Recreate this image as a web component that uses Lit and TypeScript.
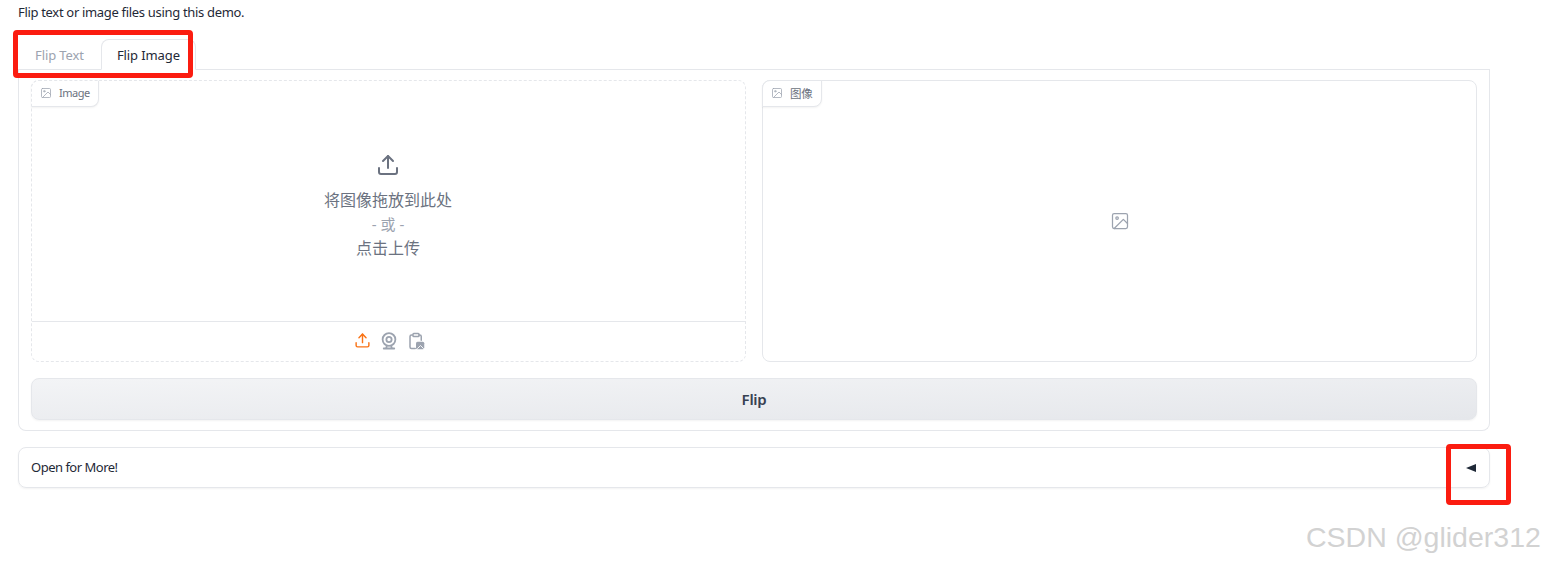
import { LitElement, html, css } from "lit";
import { customElement } from "lit/decorators.js";

const imgIcon = (s: number) => html`<svg class="ic" width=${s} height=${s} viewBox="0 0 24 24" fill="none" stroke="currentColor" stroke-width="1.5" stroke-linecap="round" stroke-linejoin="round"><rect x="3" y="3" width="18" height="18" rx="2"></rect><circle cx="8.5" cy="8.5" r="1.5"></circle><polyline points="21 15 16 10 5 21"></polyline></svg>`;

@customElement("app-root")
export class AppRoot extends LitElement {
  static styles = css`
    :host { display: block; position: relative; width: 1545px; height: 564px; overflow: hidden; background: #fff;
      font-family: "Noto Sans", "Noto Sans CJK SC", sans-serif; color: #1f2937; }
    .page { display: flex; flex-direction: column; padding: 4px 55px 0 18px; }
    .intro { font-size: 13px; line-height: 17px; height: 17px; letter-spacing: -0.32px; }
    .tabs { display: flex; margin-top: 18px; height: 30px; padding-left: 1px; border-bottom: 1px solid #e5e7eb; box-sizing: content-box; }
    .tab { font-size: 13px; letter-spacing: -0.1px; padding: 0 16px; line-height: 32px; color: #9ca3af; }
    .tab.on { color: #1f2937; border: 1px solid #e5e7eb; border-bottom: 1px solid #fff; border-radius: 8px 8px 0 0; line-height: 30px; box-sizing: border-box; margin-bottom: -1px; margin-left: 1px; height: 31px; padding: 0 15px; }
    .panel { border: 1px solid #e5e7eb; border-top: 0; border-radius: 0 0 8px 8px; padding: 10px 12px 9px; height: 361px; box-sizing: border-box; display: flex; flex-direction: column; gap: 16px; }
    .row { display: flex; gap: 16px; height: 282px; flex: none; }
    .block { flex: 1; position: relative; border: 1px solid #e5e7eb; border-radius: 8px; display: flex; flex-direction: column; box-sizing: border-box; min-width: 0; }
    .block.dash { border-style: dashed; }
    .label { position: absolute; left: -1px; top: -1px; height: 27px; box-sizing: border-box; display: flex; align-items: center; gap: 7px; padding: 0 8px 2px; font-size: 11.5px; letter-spacing: -0.2px; color: #6b7280; background: #fff; border: 1px solid #e5e7eb; border-radius: 8px 0 8px 0; box-shadow: 0 1px 2px rgba(0,0,0,.05); }
    .label.dash { border-style: dashed; border-right-style: solid; border-bottom-style: solid; font-size: 11px; letter-spacing: -0.5px; }
    .label .ic { color: #9ca3af; }
    .drop { flex: 1; display: flex; flex-direction: column; align-items: center; padding-top: 72px; padding-right: 1px; color: #6b7280; font-size: 16px; line-height: 24px; }
    .drop svg { margin-bottom: 11px; color: #6b7280; }
    .or { color: #9ca3af; font-size: 15px; }
    .tools { height: 40px; border-top: 1px solid #e5e7eb; display: flex; justify-content: center; align-items: center; gap: 9px; color: #9ca3af; padding: 0 0 2px 1px; box-sizing: border-box; }
    .empty { flex: 1; display: flex; align-items: center; justify-content: center; color: #9ca3af; }
    .btn { height: 42px; flex: none; border: 1px solid #e5e7eb; border-radius: 8px; background: linear-gradient(to bottom right, #f3f4f6, #e5e7eb); display: flex; align-items: center; justify-content: center; font-size: 15px; font-weight: 600; color: #374151; box-shadow: 0 1px 2px rgba(0,0,0,.05); letter-spacing: -0.3px; box-sizing: border-box; }
    .acc { margin-top: 16px; height: 41px; border: 1px solid #e5e7eb; border-radius: 8px; display: flex; align-items: center; justify-content: space-between; padding: 0 13px 2px 12px; font-size: 13px; letter-spacing: -0.5px; box-shadow: 0 1px 2px rgba(0,0,0,.05); box-sizing: border-box; }
    .tri { width: 0; height: 0; border-top: 4.5px solid transparent; border-bottom: 4.5px solid transparent; border-right: 10px solid #1f2937; margin-top: 2px; }
    .mark { position: absolute; border: 5px solid #fb1c10; border-radius: 4px; box-sizing: border-box; }
    .m1 { left: 13px; top: 30px; width: 180px; height: 48px; }
    .m2 { left: 1446px; top: 444px; width: 65px; height: 61px; }
    .wm { position: absolute; left: 1306px; top: 520px; font-family: "Liberation Sans", sans-serif; font-size: 28.5px; line-height: 35px; color: #d2d2d2; white-space: nowrap; }
  `;

  render() {
    return html`
      <div class="page">
        <div class="intro">Flip text or image files using this demo.</div>
        <div class="tabs"><div class="tab">Flip Text</div><div class="tab on">Flip Image</div></div>
        <div class="panel">
          <div class="row">
            <div class="block dash">
              <div class="label dash">${imgIcon(12)}<span>Image</span></div>
              <div class="drop">
                <svg width="24" height="24" viewBox="0 0 24 24" fill="none" stroke="currentColor" stroke-width="2" stroke-linecap="round" stroke-linejoin="round"><path d="M21 15v4a2 2 0 0 1-2 2H5a2 2 0 0 1-2-2v-4"></path><polyline points="17 8 12 3 7 8"></polyline><line x1="12" y1="3" x2="12" y2="15"></line></svg>
                <div>将图像拖放到此处</div>
                <div class="or">- 或 -</div>
                <div>点击上传</div>
              </div>
              <div class="tools">
                <svg width="17" height="17" viewBox="0 0 24 24" fill="none" stroke="#f97316" stroke-width="2" stroke-linecap="round" stroke-linejoin="round"><path d="M21 15v4a2 2 0 0 1-2 2H5a2 2 0 0 1-2-2v-4"></path><polyline points="17 8 12 3 7 8"></polyline><line x1="12" y1="3" x2="12" y2="15"></line></svg>
                <svg width="18" height="18" viewBox="0 0 24 24" fill="none" stroke="currentColor" stroke-width="2.4" stroke-linecap="round"><circle cx="12" cy="10" r="8.5"></circle><circle cx="12" cy="10" r="3.5"></circle><path d="M5 22h14M9 19l-1 3M15 19l1 3"></path></svg>
                <svg width="18" height="18" viewBox="0 0 24 24" fill="none" stroke="currentColor" stroke-width="2" stroke-linecap="round" stroke-linejoin="round"><path d="M16 4h1a2 2 0 0 1 2 2v5M7 4H6a2 2 0 0 0-2 2v14a2 2 0 0 0 2 2h5"></path><rect x="8" y="2" width="8" height="4" rx="1"></rect><rect x="12" y="13" width="11" height="10" rx="2" fill="currentColor" stroke="none"></rect><path d="M14 22l4-4 4 4" stroke="#fff" stroke-width="1.2"></path></svg>
              </div>
            </div>
            <div class="block">
              <div class="label">${imgIcon(12)}<span>图像</span></div>
              <div class="empty">${imgIcon(20)}</div>
            </div>
          </div>
          <div class="btn">Flip</div>
        </div>
        <div class="acc"><span>Open for More!</span><span class="tri"></span></div>
      </div>
      <div class="mark m1"></div>
      <div class="mark m2"></div>
      <div class="wm">CSDN @glider312</div>
    `;
  }
}
